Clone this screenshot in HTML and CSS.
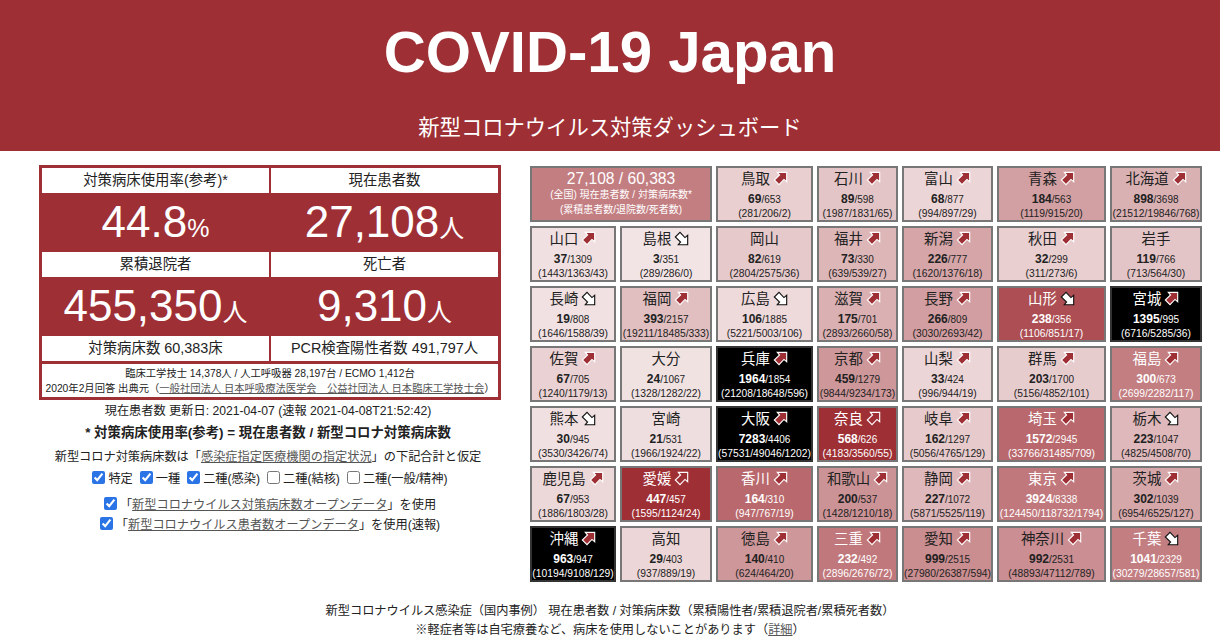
FILE: index.html
```html
<!DOCTYPE html>
<html lang="ja">
<head>
<meta charset="UTF-8">
<title>COVID-19 Japan</title>
<link rel="stylesheet" href="styles.css">
</head>
<body>
<svg class="defs" width="0" height="0">
  <symbol id="arrow" viewBox="0 0 16 16"><path d="M14.6 1.4V11.4L11.7 9 6.4 14.6 1.4 9.6 7 4.3 4.6 1.4Z"/></symbol>
</svg>

<header class="top">
  <h1>COVID-19 Japan</h1>
  <h3>新型コロナウイルス対策ダッシュボード</h3>
</header>

<div class="main">
  <section class="left">
    <div class="panel">
      <div class="label">対策病床使用率(参考)*</div>
      <div class="label">現在患者数</div>
      <div class="value">44.8<small>%</small></div>
      <div class="value">27,108<small>人</small></div>
      <div class="label">累積退院者</div>
      <div class="label">死亡者</div>
      <div class="value">455,350<small>人</small></div>
      <div class="value">9,310<small>人</small></div>
      <div class="label">対策病床数 60,383床</div>
      <div class="label">PCR検査陽性者数 491,797人</div>
      <div class="note">
        <div>臨床工学技士 14,378人 / 人工呼吸器 28,197台 / ECMO 1,412台</div>
        <div>2020年2月回答 出典元（<a href="#">一般社団法人 日本呼吸療法医学会　公益社団法人 日本臨床工学技士会</a>）</div>
      </div>
    </div>
    <p class="updated">現在患者数 更新日: 2021-04-07 (速報 2021-04-08T21:52:42)</p>
    <p class="formula">* 対策病床使用率(参考) = 現在患者数 / 新型コロナ対策病床数</p>
    <p class="assume">新型コロナ対策病床数は「<a href="#">感染症指定医療機関の指定状況</a>」の下記合計と仮定</p>
    <div class="checks">
      <label><input type="checkbox" checked>特定</label>
      <label><input type="checkbox" checked>一種</label>
      <label><input type="checkbox" checked>二種(感染)</label>
      <label><input type="checkbox">二種(結核)</label>
      <label><input type="checkbox">二種(一般/精神)</label>
    </div>
    <div class="opt first"><label><input type="checkbox" checked>「<a href="#">新型コロナウイルス対策病床数オープンデータ</a>」を使用</label></div>
    <div class="opt"><label><input type="checkbox" checked>「<a href="#">新型コロナウイルス患者数オープンデータ</a>」を使用(速報)</label></div>
  </section>

  <section class="grid">
    <div class="cell total lt" style="background:rgba(158,47,53,.62)">
      <div class="big">27,108 / 60,383</div>
      <div class="sub">(全国) 現在患者数 / 対策病床数*</div>
      <div class="sub">(累積患者数/退院数/死者数)</div>
    </div>
    <div class="cell" style="background:rgba(158,47,53,.23)"><div class="name">鳥取<svg class="arr up"><use href="#arrow"/></svg></div><div class="count"><b>69</b>/653</div><div class="sum">(281/206/2)</div></div>
    <div class="cell" style="background:rgba(158,47,53,.28)"><div class="name">石川<svg class="arr up"><use href="#arrow"/></svg></div><div class="count"><b>89</b>/598</div><div class="sum">(1987/1831/65)</div></div>
    <div class="cell" style="background:rgba(158,47,53,.2)"><div class="name">富山<svg class="arr up"><use href="#arrow"/></svg></div><div class="count"><b>68</b>/877</div><div class="sum">(994/897/29)</div></div>
    <div class="cell" style="background:rgba(158,47,53,.46)"><div class="name">青森<svg class="arr up"><use href="#arrow"/></svg></div><div class="count"><b>184</b>/563</div><div class="sum">(1119/915/20)</div></div>
    <div class="cell" style="background:rgba(158,47,53,.375)"><div class="name">北海道<svg class="arr up"><use href="#arrow"/></svg></div><div class="count"><b>898</b>/3698</div><div class="sum">(21512/19846/768)</div></div>

    <div class="cell" style="background:rgba(158,47,53,.15)"><div class="name">山口<svg class="arr up"><use href="#arrow"/></svg></div><div class="count"><b>37</b>/1309</div><div class="sum">(1443/1363/43)</div></div>
    <div class="cell" style="background:rgba(158,47,53,.13)"><div class="name">島根<svg class="arr dn"><use href="#arrow"/></svg></div><div class="count"><b>3</b>/351</div><div class="sum">(289/286/0)</div></div>
    <div class="cell" style="background:rgba(158,47,53,.26)"><div class="name">岡山</div><div class="count"><b>82</b>/619</div><div class="sum">(2804/2575/36)</div></div>
    <div class="cell" style="background:rgba(158,47,53,.35)"><div class="name">福井<svg class="arr up"><use href="#arrow"/></svg></div><div class="count"><b>73</b>/330</div><div class="sum">(639/539/27)</div></div>
    <div class="cell" style="background:rgba(158,47,53,.43)"><div class="name">新潟<svg class="arr up"><use href="#arrow"/></svg></div><div class="count"><b>226</b>/777</div><div class="sum">(1620/1376/18)</div></div>
    <div class="cell" style="background:rgba(158,47,53,.23)"><div class="name">秋田<svg class="arr up"><use href="#arrow"/></svg></div><div class="count"><b>32</b>/299</div><div class="sum">(311/273/6)</div></div>
    <div class="cell" style="background:rgba(158,47,53,.28)"><div class="name">岩手</div><div class="count"><b>119</b>/766</div><div class="sum">(713/564/30)</div></div>

    <div class="cell" style="background:rgba(158,47,53,.145)"><div class="name">長崎<svg class="arr dn"><use href="#arrow"/></svg></div><div class="count"><b>19</b>/808</div><div class="sum">(1646/1588/39)</div></div>
    <div class="cell" style="background:rgba(158,47,53,.31)"><div class="name">福岡<svg class="arr up"><use href="#arrow"/></svg></div><div class="count"><b>393</b>/2157</div><div class="sum">(19211/18485/333)</div></div>
    <div class="cell" style="background:rgba(158,47,53,.18)"><div class="name">広島<svg class="arr dn"><use href="#arrow"/></svg></div><div class="count"><b>106</b>/1885</div><div class="sum">(5221/5003/106)</div></div>
    <div class="cell" style="background:rgba(158,47,53,.38)"><div class="name">滋賀<svg class="arr up"><use href="#arrow"/></svg></div><div class="count"><b>175</b>/701</div><div class="sum">(2893/2660/58)</div></div>
    <div class="cell" style="background:rgba(158,47,53,.465)"><div class="name">長野<svg class="arr up"><use href="#arrow"/></svg></div><div class="count"><b>266</b>/809</div><div class="sum">(3030/2693/42)</div></div>
    <div class="cell lt" style="background:rgba(158,47,53,.85)"><div class="name">山形<svg class="arr dn"><use href="#arrow"/></svg></div><div class="count"><b>238</b>/356</div><div class="sum">(1106/851/17)</div></div>
    <div class="cell lt over"><div class="name">宮城<svg class="arr up"><use href="#arrow"/></svg></div><div class="count"><b>1395</b>/995</div><div class="sum">(6716/5285/36)</div></div>

    <div class="cell" style="background:rgba(158,47,53,.22)"><div class="name">佐賀<svg class="arr up"><use href="#arrow"/></svg></div><div class="count"><b>67</b>/705</div><div class="sum">(1240/1179/13)</div></div>
    <div class="cell" style="background:rgba(158,47,53,.14)"><div class="name">大分</div><div class="count"><b>24</b>/1067</div><div class="sum">(1328/1282/22)</div></div>
    <div class="cell lt over"><div class="name">兵庫<svg class="arr up"><use href="#arrow"/></svg></div><div class="count"><b>1964</b>/1854</div><div class="sum">(21208/18648/596)</div></div>
    <div class="cell" style="background:rgba(158,47,53,.5)"><div class="name">京都<svg class="arr up"><use href="#arrow"/></svg></div><div class="count"><b>459</b>/1279</div><div class="sum">(9844/9234/173)</div></div>
    <div class="cell" style="background:rgba(158,47,53,.2)"><div class="name">山梨<svg class="arr up"><use href="#arrow"/></svg></div><div class="count"><b>33</b>/424</div><div class="sum">(996/944/19)</div></div>
    <div class="cell" style="background:rgba(158,47,53,.245)"><div class="name">群馬<svg class="arr up"><use href="#arrow"/></svg></div><div class="count"><b>203</b>/1700</div><div class="sum">(5156/4852/101)</div></div>
    <div class="cell lt" style="background:rgba(158,47,53,.62)"><div class="name">福島<svg class="arr up"><use href="#arrow"/></svg></div><div class="count"><b>300</b>/673</div><div class="sum">(2699/2282/117)</div></div>

    <div class="cell" style="background:rgba(158,47,53,.15)"><div class="name">熊本<svg class="arr dn"><use href="#arrow"/></svg></div><div class="count"><b>30</b>/945</div><div class="sum">(3530/3426/74)</div></div>
    <div class="cell" style="background:rgba(158,47,53,.16)"><div class="name">宮崎</div><div class="count"><b>21</b>/531</div><div class="sum">(1966/1924/22)</div></div>
    <div class="cell lt over"><div class="name">大阪<svg class="arr up"><use href="#arrow"/></svg></div><div class="count"><b>7283</b>/4406</div><div class="sum">(57531/49046/1202)</div></div>
    <div class="cell lt" style="background:rgb(158,47,53)"><div class="name">奈良<svg class="arr up"><use href="#arrow"/></svg></div><div class="count"><b>568</b>/626</div><div class="sum">(4183/3560/55)</div></div>
    <div class="cell" style="background:rgba(158,47,53,.25)"><div class="name">岐阜<svg class="arr up"><use href="#arrow"/></svg></div><div class="count"><b>162</b>/1297</div><div class="sum">(5056/4765/129)</div></div>
    <div class="cell lt" style="background:rgba(158,47,53,.72)"><div class="name">埼玉<svg class="arr up"><use href="#arrow"/></svg></div><div class="count"><b>1572</b>/2945</div><div class="sum">(33766/31485/709)</div></div>
    <div class="cell" style="background:rgba(158,47,53,.34)"><div class="name">栃木<svg class="arr dn"><use href="#arrow"/></svg></div><div class="count"><b>223</b>/1047</div><div class="sum">(4825/4508/70)</div></div>

    <div class="cell" style="background:rgba(158,47,53,.19)"><div class="name">鹿児島<svg class="arr up"><use href="#arrow"/></svg></div><div class="count"><b>67</b>/953</div><div class="sum">(1886/1803/28)</div></div>
    <div class="cell lt" style="background:rgb(158,47,53)"><div class="name">愛媛<svg class="arr up"><use href="#arrow"/></svg></div><div class="count"><b>447</b>/457</div><div class="sum">(1595/1124/24)</div></div>
    <div class="cell lt" style="background:rgba(158,47,53,.72)"><div class="name">香川<svg class="arr up"><use href="#arrow"/></svg></div><div class="count"><b>164</b>/310</div><div class="sum">(947/767/19)</div></div>
    <div class="cell" style="background:rgba(158,47,53,.52)"><div class="name">和歌山<svg class="arr up"><use href="#arrow"/></svg></div><div class="count"><b>200</b>/537</div><div class="sum">(1428/1210/18)</div></div>
    <div class="cell" style="background:rgba(158,47,53,.34)"><div class="name">静岡<svg class="arr up"><use href="#arrow"/></svg></div><div class="count"><b>227</b>/1072</div><div class="sum">(5871/5525/119)</div></div>
    <div class="cell lt" style="background:rgba(158,47,53,.65)"><div class="name">東京<svg class="arr up"><use href="#arrow"/></svg></div><div class="count"><b>3924</b>/8338</div><div class="sum">(124450/118732/1794)</div></div>
    <div class="cell" style="background:rgba(158,47,53,.425)"><div class="name">茨城<svg class="arr up"><use href="#arrow"/></svg></div><div class="count"><b>302</b>/1039</div><div class="sum">(6954/6525/127)</div></div>

    <div class="cell lt over"><div class="name">沖縄<svg class="arr up"><use href="#arrow"/></svg></div><div class="count"><b>963</b>/947</div><div class="sum">(10194/9108/129)</div></div>
    <div class="cell" style="background:rgba(158,47,53,.195)"><div class="name">高知</div><div class="count"><b>29</b>/403</div><div class="sum">(937/889/19)</div></div>
    <div class="cell" style="background:rgba(158,47,53,.5)"><div class="name">徳島<svg class="arr up"><use href="#arrow"/></svg></div><div class="count"><b>140</b>/410</div><div class="sum">(624/464/20)</div></div>
    <div class="cell lt" style="background:rgba(158,47,53,.65)"><div class="name">三重<svg class="arr up"><use href="#arrow"/></svg></div><div class="count"><b>232</b>/492</div><div class="sum">(2896/2676/72)</div></div>
    <div class="cell" style="background:rgba(158,47,53,.55)"><div class="name">愛知<svg class="arr up"><use href="#arrow"/></svg></div><div class="count"><b>999</b>/2515</div><div class="sum">(27980/26387/594)</div></div>
    <div class="cell" style="background:rgba(158,47,53,.54)"><div class="name">神奈川<svg class="arr up"><use href="#arrow"/></svg></div><div class="count"><b>992</b>/2531</div><div class="sum">(48893/47112/789)</div></div>
    <div class="cell lt" style="background:rgba(158,47,53,.62)"><div class="name">千葉<svg class="arr dn"><use href="#arrow"/></svg></div><div class="count"><b>1041</b>/2329</div><div class="sum">(30279/28657/581)</div></div>
  </section>
</div>

<footer class="foot">
  <div>新型コロナウイルス感染症（国内事例） 現在患者数 / 対策病床数（累積陽性者/累積退院者/累積死者数）</div>
  <div>※軽症者等は自宅療養など、病床を使用しないことがあります（<a href="#">詳細</a>）</div>
</footer>
</body>
</html>
```

FILE: styles.css
```css
body {
  margin: 0;
  background-color: #fff;
  color: #222;
  font-family: "Liberation Sans", "Noto Sans CJK JP", sans-serif;
  overflow: hidden;
}

a:link, a:visited {
  color: #555;
}

.defs {
  display: none;
}

.top {
  height: 151px;
  background-color: #9e2f35;
  color: #fff;
  text-align: center;
}

.top h1 {
  margin: 0;
  padding-top: 19px;
  font-size: 58.2px;
  line-height: 66px;
  font-weight: bold;
}

.top h3 {
  margin: 0;
  padding-top: 29px;
  font-size: 21.3px;
  line-height: 28px;
  font-weight: normal;
}

.main {
  display: flex;
  align-items: flex-start;
  gap: 29px;
  padding: 14px 0 0 39px;
}

/* left column */
.left {
  width: 462px;
  text-align: center;
  font-size: 12.2px;
}

.panel {
  display: grid;
  grid-template-columns: 227px 227px;
  column-gap: 2px;
  border: 3px solid #9e2f35;
  background-color: #9e2f35;
}

.label {
  height: 25px;
  line-height: 25px;
  background-color: #fff;
  font-size: 14.4px;
}

.value {
  height: 59px;
  line-height: 58px;
  color: #fff;
  font-size: 44px;
}

.value small {
  font-size: 25px;
}

.note {
  grid-column: 1 / 3;
  margin-top: 3px;
  padding: 1.5px 0;
  background-color: #fff;
  font-size: 10.3px;
  line-height: 15px;
}

.updated {
  margin: 3px 0 0;
  line-height: 16px;
  padding-right: 4px;
}

.formula {
  margin: 6px 0 0;
  line-height: 16px;
  font-size: 13.4px;
  font-weight: bold;
  padding-right: 4px;
}

.assume {
  margin: 8px 0 0;
  line-height: 16px;
  padding-right: 4px;
}

.checks {
  display: flex;
  justify-content: center;
  gap: 7px;
  margin-top: 6px;
  line-height: 16px;
}

.checks input, .opt input {
  width: 13px;
  height: 13px;
  margin: 0 3px 0 0;
  accent-color: #2b74e6;
  vertical-align: -1px;
}

.opt {
  margin-top: 4px;
  line-height: 16px;
}

.opt.first {
  margin-top: 10px;
}

/* prefecture grid */
.grid {
  display: grid;
  grid-template-columns: 86px 92px 97px 81px 91px 109px 92px;
  grid-auto-rows: 56px;
  gap: 4px;
  margin-top: 1px;
}

.cell {
  box-sizing: border-box;
  border: 2px solid #777;
  padding-top: 1px;
  text-align: center;
  color: #222;
  white-space: nowrap;
  overflow: hidden;
}

.cell.lt {
  color: #fff;
}

.cell.over {
  background-color: #000;
  border-color: #333;
}

.total {
  grid-column: span 2;
}

.big {
  font-size: 15.6px;
  line-height: 19px;
  margin-bottom: -1px;
}

.sub {
  font-size: 10px;
  line-height: 15px;
}

.name {
  font-size: 14.4px;
  line-height: 20px;
}

.arr {
  width: 15px;
  height: 15px;
  margin-left: 3px;
  vertical-align: -2px;
}

.arr.up {
  fill: #9e2f35;
  stroke: #fff;
  stroke-width: 1.2;
}

.arr.dn {
  fill: #fff;
  stroke: #111;
  stroke-width: 1.2;
  transform: rotate(90deg);
}

.count {
  margin-top: 3px;
  font-size: 10px;
  line-height: 14px;
}

.count b {
  font-size: 12px;
}

.sum {
  font-size: 10.3px;
  line-height: 13px;
}

.foot {
  margin-top: 20px;
  text-align: center;
  font-size: 12.2px;
  line-height: 19px;
}
```
